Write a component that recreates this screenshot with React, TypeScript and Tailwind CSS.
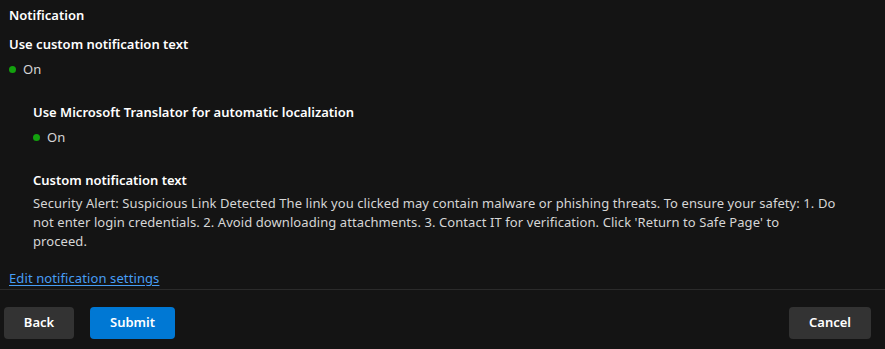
import React from 'react';

const font = { fontFamily: '"Segoe UI", "Noto Sans", "Open Sans", sans-serif' };

const Status: React.FC<{ label: string }> = ({ label }) => (
  <div className="flex items-center gap-[7px] h-5 text-[13px] tracking-[0.1px] text-[#d6d6d6]">
    <span className="w-[7px] h-[7px] rounded-full bg-[#13a10e] -mt-[1px]" />
    <span>{label}</span>
  </div>
);

export default function App() {
  return (
    <div className="w-[885px] h-[349px] bg-[#141414] text-white flex flex-col" style={font}>
      {/* Summary */}
      <div className="flex-1 px-[9px] pt-[5px]">
        <h2 className="text-[13px] font-semibold leading-5">Notification</h2>

        <div className="mt-[9px]">
          <div className="text-[13px] font-semibold leading-5">Use custom notification text</div>
          <div className="mt-[6px]">
            <Status label="On" />
          </div>
        </div>

        <div className="pl-6 mt-[22px]">
          <div className="text-[13px] font-semibold leading-5">Use Microsoft Translator for automatic localization</div>
          <div className="mt-[6px]">
            <Status label="On" />
          </div>

          <div className="text-[13px] font-semibold leading-5 mt-[22px]">Custom notification text</div>
          <p className="mt-[4px] text-[13px] tracking-[0.08px] leading-[19px] text-[#d6d6d6] max-w-[805px]">
            Security Alert: Suspicious Link Detected The link you clicked may contain malware or phishing threats. To ensure your safety: 1. Do not enter login credentials. 2. Avoid downloading attachments. 3. Contact IT for verification. Click 'Return to Safe Page' to
            <br />
            proceed.
          </p>
        </div>

        <a href="#" className="block mt-[17px] text-[13px] tracking-[0.1px] leading-5 text-[#479ef5] underline underline-offset-2">
          Edit notification settings
        </a>
      </div>

      {/* Footer */}
      <div className="border-t border-[#2b2b2b] h-[60px] flex items-start justify-between px-1 pt-[17px]">
        <div className="flex gap-4">
          <button className="h-8 w-[70px] rounded-[4px] bg-[#333333] text-[13px] font-semibold text-white">Back</button>
          <button className="h-8 w-[85px] rounded-[4px] bg-[#0078d4] text-[13px] font-semibold text-white">Submit</button>
        </div>
        <button className="h-8 w-[82px] mr-[10px] rounded-[4px] bg-[#333333] text-[13px] font-semibold text-white">Cancel</button>
      </div>
    </div>
  );
}
